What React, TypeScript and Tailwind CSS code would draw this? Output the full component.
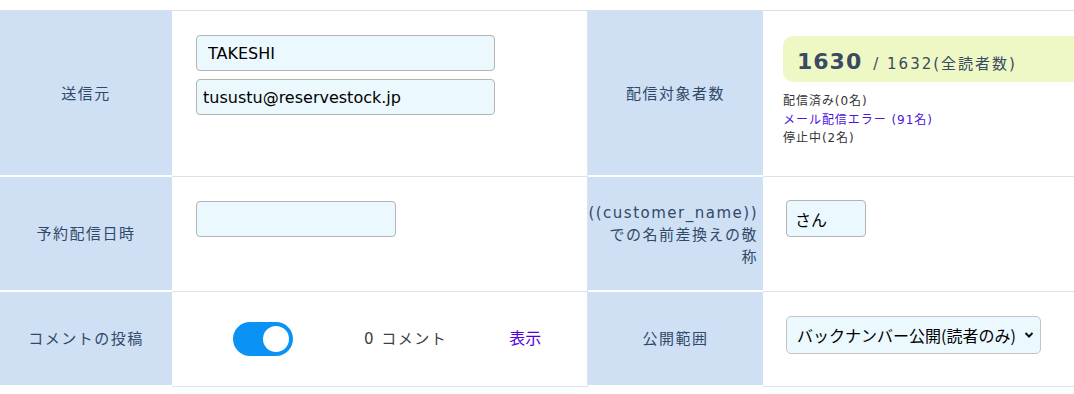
export default function App() {
  const head =
    "flex items-center justify-center bg-[#cfdff4] border-b-2 border-white pt-[2px] text-[15px] tracking-[0.1em] text-[#2f4a68]";
  const cell = "border-b border-[#dde2ec]";
  const input =
    "h-9 rounded-[4px] border border-[#b4b4b4] bg-[#ebf8fe] text-black outline-none";

  return (
    <div
      className="w-[1074px] h-[394px] overflow-hidden bg-white"
      style={{ fontFamily: '"DejaVu Sans", "Noto Sans CJK JP", sans-serif' }}
    >
      <div className="mt-[10px] w-[1100px] border-t border-[#dcdcec]">
        {/* 送信元 / 配信対象者数 */}
        <div className="grid h-[166px] grid-cols-[172px_416px_175px_1fr]">
          <div className={head}>送信元</div>
          <div className={`${cell} border-r border-r-[#dde2ec] pl-6 pt-6`}>
            <input className={`${input} w-[299px] px-[11px] text-[16px]`} defaultValue="TAKESHI" />
            <input
              className={`${input} mt-2 w-[299px] px-[6px] text-[16px] text-[#444]`}
              defaultValue="tusustu@reservestock.jp"
            />
          </div>
          <div className={head}>配信対象者数</div>
          <div className={`${cell} pl-5 pt-[25px]`}>
            <div className="flex h-[46px] items-baseline rounded-l-[10px] bg-[#eef8c4] pl-[14px] pt-[9px] text-[#3b4a62]">
              <span className="text-[22px] font-bold tracking-[1px]">1630</span>
              <span className="ml-[11px] text-[15px] tracking-[2px]">/ 1632(全読者数)</span>
            </div>
            <div className="mt-[10px] text-[12px] leading-[18.5px] tracking-[0.08em] text-[#333]">
              <div>配信済み(0名)</div>
              <div className="text-[#4b14e0]">メール配信エラー (91名)</div>
              <div>停止中(2名)</div>
            </div>
          </div>
        </div>

        {/* 予約配信日時 / 敬称 */}
        <div className="grid h-[115px] grid-cols-[172px_416px_175px_1fr]">
          <div className={head}>予約配信日時</div>
          <div className={`${cell} border-r border-r-[#dde2ec] pl-6 pt-6`}>
            <input className={`${input} w-[200px] px-[11px]`} />
          </div>
          <div className={`${head} !justify-end pr-[5px] text-right leading-[22px] whitespace-nowrap`}>
            <div>
              ((customer_name))
              <br />
              での名前差換えの敬
              <br />
              称
            </div>
          </div>
          <div className={`${cell} pl-[23px] pt-[23px]`}>
            <input
              className={`${input} h-[37px] w-[80px] px-[8px] text-[16px]`}
              style={{ fontFamily: '"Noto Sans CJK JP", sans-serif' }}
              defaultValue="さん"
            />
          </div>
        </div>

        {/* コメントの投稿 / 公開範囲 */}
        <div className="grid h-[95px] grid-cols-[172px_416px_175px_1fr]">
          <div className={head}>コメントの投稿</div>
          <div className={`${cell} flex items-center border-r border-r-[#dde2ec] pl-[61px]`}>
            <div className="flex h-[34px] w-[60px] items-center justify-end rounded-full bg-[#0a93f5] pr-[4px]">
              <div className="h-[26px] w-[26px] rounded-full bg-white" />
            </div>
            <span className="ml-[71px] text-[15px] tracking-[0.1em] text-[#3a3f48]">0 コメント</span>
            <span className="ml-[62px] text-[16px] text-[#5000dd]">表示</span>
          </div>
          <div className={head}>公開範囲</div>
          <div className={`${cell} pl-[23px] pt-6`}>
            <div className="relative w-[255px]">
              <select
                className="h-[38px] w-full appearance-none rounded-[5px] border border-[#c4c4c4] bg-[#ebf8fe] pl-[10px] text-[16px] text-black outline-none"
                style={{ fontFamily: '"Noto Sans CJK JP", sans-serif' }}
                defaultValue="a"
              >
                <option value="a">バックナンバー公開(読者のみ)</option>
              </select>
              <svg
                className="pointer-events-none absolute right-[7px] top-[15px]"
                width="10"
                height="8"
                viewBox="0 0 10 8"
              >
                <path d="M1.5 2l3.5 3.5L8.5 2" fill="none" stroke="#111" strokeWidth="2" />
              </svg>
            </div>
          </div>
        </div>
      </div>
    </div>
  );
}
